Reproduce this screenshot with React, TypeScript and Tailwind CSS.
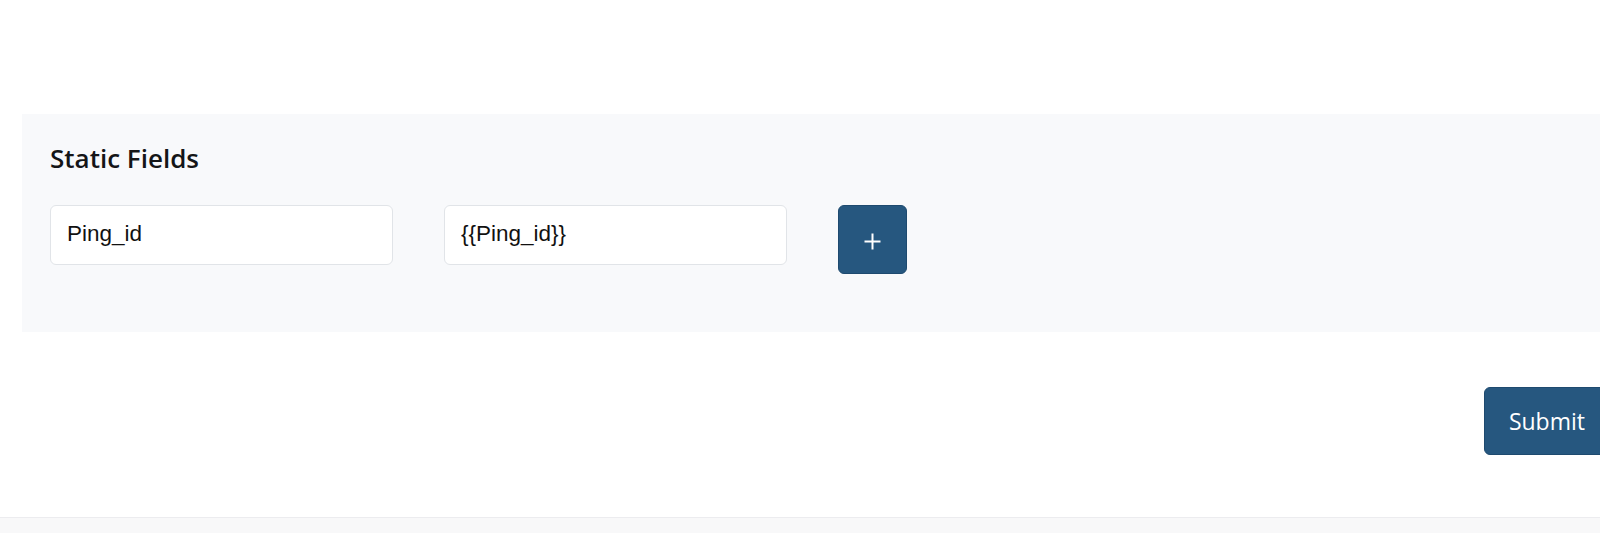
export default function App() {
  return (
    <div className="h-[533px] w-full overflow-hidden bg-white flex flex-col">
      <div className="w-[1640px] pl-[22px] pt-[114px]">
        {/* Static fields panel */}
        <section className="bg-[#f8f9fb] pl-[28px] pt-[27px] pb-[58px]">
          <h2 className="text-[26px] leading-[34px] font-semibold text-[#141517] font-['Open_Sans','Noto_Sans',sans-serif]">
            Static Fields
          </h2>
          <div className="mt-[30px] flex items-start gap-[51px]">
            <input
              readOnly
              value="Ping_id"
              className="h-[60px] w-[343px] rounded-[6px] border border-[#e1e4e8] bg-white px-[16px] pb-[3px] text-[22.5px] text-[#111] outline-none font-['Liberation_Sans',Arial,sans-serif]"
            />
            <input
              readOnly
              value="{{Ping_id}}"
              className="h-[60px] w-[343px] rounded-[6px] border border-[#e1e4e8] bg-white px-[16px] pb-[3px] text-[22.5px] text-[#111] outline-none font-['Liberation_Sans',Arial,sans-serif]"
            />
            <button className="flex h-[69px] w-[69px] items-center justify-center rounded-[6px] border border-[#1e4a6f] bg-[#26577f]">
              <svg width="17" height="17" viewBox="0 0 17 17" className="mt-[3px]">
                <path d="M8.5 0.5v16M0.5 8.5h16" stroke="#fff" strokeWidth="2" />
              </svg>
            </button>
          </div>
        </section>

        <div className="flex justify-end pr-[30px] pt-[55px]">
          <button className="h-[68px] rounded-[6px] border border-[#1e4a6f] bg-[#26577f] px-[24px] text-[23px] text-white font-['Open_Sans','Noto_Sans',sans-serif]">
            Submit
          </button>
        </div>
      </div>

      <div className="mt-auto h-[16px] border-t border-[#ececef] bg-[#f8f8f9]" />
    </div>
  );
}
